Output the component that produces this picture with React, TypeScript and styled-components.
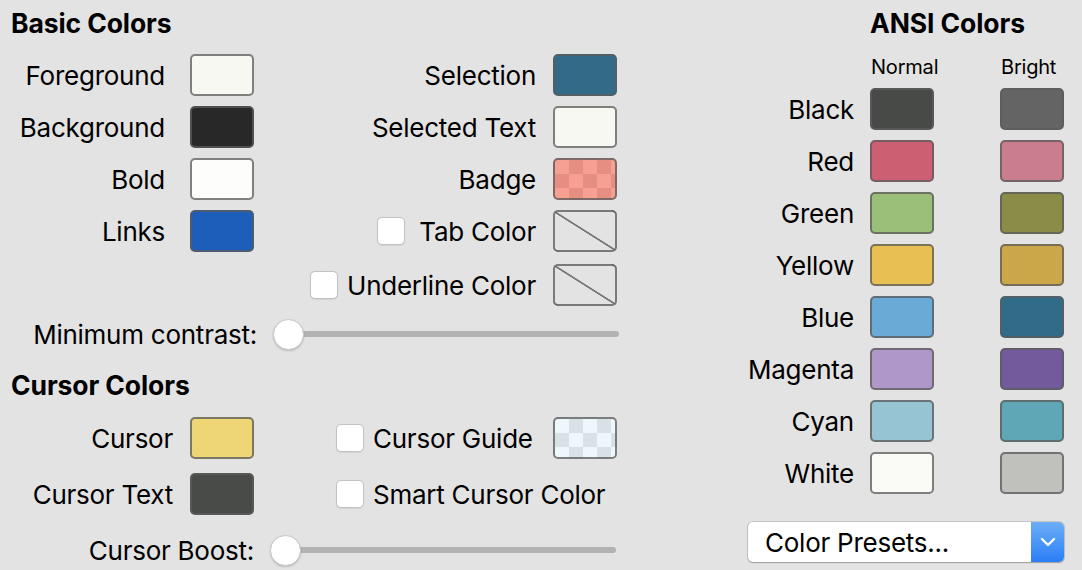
import React from 'react';
import styled, { createGlobalStyle } from 'styled-components';

const GlobalStyle = createGlobalStyle`
  html, body { margin: 0; padding: 0; background: #e3e3e3; }
  body { font-family: Inter, "Noto Sans", "Liberation Sans", sans-serif; color: #000; }
  * { box-sizing: border-box; }
`;

const Page = styled.div`
  width: 1082px;
  height: 570px;
  display: flex;
  overflow: hidden;
  background: #e3e3e3;
`;

const LeftPanel = styled.div`
  width: 640px;
  padding: 8px 0 0 11px;
  display: flex;
  flex-direction: column;
`;

const RightPanel = styled.div`
  flex: 1;
  padding: 8px 18px 0 0;
  display: flex;
  flex-direction: column;
`;

const Heading = styled.h2<{ $mt?: number }>`
  margin: ${p => p.$mt ?? 0}px 0 0 0;
  font-size: 26.5px;
  font-weight: 700;
  line-height: 30px;
  letter-spacing: -0.1px;
  white-space: nowrap;
`;

const Label = styled.span`
  font-size: 26px;
  line-height: 30px;
  padding-top: 2px;
  white-space: nowrap;
  letter-spacing: -0.25px;
`;

const Swatch = styled.div<{ $bg: string }>`
  width: 64px;
  height: 42px;
  flex: none;
  border: 2px solid rgba(92, 92, 92, 0.78);
  border-radius: 5px;
  background: ${p => p.$bg};
`;

const checker = (a: string, b: string) =>
  `repeating-conic-gradient(${a} 0 25%, ${b} 0 50%) 0 0 / 28px 28px`;
const none =
  'linear-gradient(to top right, transparent calc(50% - 1.2px), #7a7a7a calc(50% - 0.6px), #7a7a7a calc(50% + 0.6px), transparent calc(50% + 1.2px))';

const Checkbox = styled.span`
  width: 28px;
  height: 28px;
  flex: none;
  background: #fff;
  border: 1px solid #c2c2c2;
  border-radius: 5px;
  box-shadow: 0 0.5px 1px rgba(0, 0, 0, 0.08);
`;

const Grid = styled.div<{ $mt: number }>`
  display: flex;
  margin-top: ${p => p.$mt}px;
`;

const Column = styled.div<{ $width: number; $gap: number; $pl?: number }>`
  width: ${p => p.$width}px;
  padding-left: ${p => p.$pl ?? 0}px;
  display: flex;
  flex-direction: column;
  gap: ${p => p.$gap}px;
`;

const ColorRow = styled.div<{ $gap: number; $mt?: number; $start?: boolean }>`
  display: flex;
  align-items: center;
  justify-content: ${p => (p.$start ? 'flex-start' : 'flex-end')};
  height: 42px;
  gap: ${p => p.$gap}px;
  margin-top: ${p => p.$mt ?? 0}px;
`;

const CheckLabel = styled.label<{ $gap: number }>`
  display: flex;
  align-items: center;
  gap: ${p => p.$gap}px;
`;

const PushRight = styled.div`
  margin-left: auto;
`;

const SliderRow = styled.div<{ $width: number; $mt: number }>`
  width: ${p => p.$width}px;
  margin-top: ${p => p.$mt}px;
  height: 32px;
  display: flex;
  align-items: center;
  justify-content: flex-end;
  gap: 16px;
`;

const Slider = styled.div`
  position: relative;
  width: 346px;
  height: 32px;
  display: flex;
  align-items: center;
`;

const Track = styled.div`
  flex: 1;
  margin-left: 14px;
  height: 6px;
  border-radius: 3px;
  background: #b2b2b2;
`;

const Knob = styled.div`
  position: absolute;
  left: 0;
  top: 50%;
  width: 31px;
  height: 31px;
  margin-top: -15.5px;
  border-radius: 50%;
  background: #fff;
  border: 1px solid #c8c8c8;
  box-shadow: 0 1px 2px rgba(0, 0, 0, 0.18);
`;

const AnsiRow = styled.div<{ $mt?: number; $h?: number }>`
  display: flex;
  align-items: center;
  height: ${p => p.$h ?? 42}px;
  margin-top: ${p => p.$mt ?? 0}px;
`;

const AnsiLabel = styled(Label)`
  flex: 1;
  text-align: right;
  margin-right: 16px;
`;

const ColumnsBlock = styled.div`
  width: 194px;
  flex: none;
  display: flex;
  align-items: center;
`;

const ColHeader = styled.span`
  width: 64px;
  flex: none;
  padding-left: 1px;
  font-size: 20px;
  line-height: 24px;
  letter-spacing: -0.2px;
  white-space: nowrap;
`;

const HeaderSpacer = styled.div`
  flex: 1;
  margin-right: 16px;
`;

const BrightGap = styled.div`
  width: 66px;
  flex: none;
`;

const Popup = styled.div`
  margin: 28px 0 0 auto;
  width: 316px;
  height: 40px;
  display: flex;
  align-items: stretch;
  background: #fff;
  border-radius: 5px;
  box-shadow: 0 0 0 1px rgba(0, 0, 0, 0.12), 0 1px 1.5px rgba(0, 0, 0, 0.22);
  overflow: hidden;
`;

const PopupText = styled.span`
  flex: 1;
  padding: 1px 0 0 17px;
  font-size: 26px;
  line-height: 39px;
  letter-spacing: -0.25px;
  white-space: nowrap;
`;

const PopupButton = styled.div`
  width: 33px;
  display: flex;
  align-items: center;
  justify-content: center;
  background: linear-gradient(#6caef7, #2a7ef6);
`;

const ansi: [string, string, string][] = [
  ['Black', '#474a46', '#646464'],
  ['Red', '#cc5f72', '#c97d8d'],
  ['Green', '#9bbe79', '#8a8c48'],
  ['Yellow', '#e8bf53', '#cca74a'],
  ['Blue', '#6aaad7', '#306b89'],
  ['Magenta', '#b097c9', '#735a9c'],
  ['Cyan', '#96c4d2', '#5fa7b7'],
  ['White', '#fafaf7', '#c0c1bd'],
];

export default function App() {
  return (
    <>
      <GlobalStyle />
      <Page>
        <LeftPanel>
          <Heading>Basic Colors</Heading>
          <Grid $mt={16}>
            <Column $width={243} $gap={10}>
              <ColorRow $gap={25}>
                <Label>Foreground</Label>
                <Swatch $bg="#f8f8f2" />
              </ColorRow>
              <ColorRow $gap={25}>
                <Label>Background</Label>
                <Swatch $bg="#282828" />
              </ColorRow>
              <ColorRow $gap={25}>
                <Label>Bold</Label>
                <Swatch $bg="#fdfdfb" />
              </ColorRow>
              <ColorRow $gap={25}>
                <Label>Links</Label>
                <Swatch $bg="#1d5eba" />
              </ColorRow>
            </Column>
            <Column $width={363} $gap={10}>
              <ColorRow $gap={17}>
                <Label>Selection</Label>
                <Swatch $bg="#336a87" />
              </ColorRow>
              <ColorRow $gap={17}>
                <Label>Selected Text</Label>
                <Swatch $bg="#f8f8f2" />
              </ColorRow>
              <ColorRow $gap={17}>
                <Label>Badge</Label>
                <Swatch $bg={checker('#e68e82', '#f6a092')} />
              </ColorRow>
              <ColorRow $gap={17}>
                <CheckLabel $gap={14}>
                  <Checkbox />
                  <Label>Tab Color</Label>
                </CheckLabel>
                <Swatch $bg={none} />
              </ColorRow>
              <ColorRow $gap={17} $mt={2}>
                <CheckLabel $gap={9}>
                  <Checkbox />
                  <Label>Underline Color</Label>
                </CheckLabel>
                <Swatch $bg={none} />
              </ColorRow>
            </Column>
          </Grid>
          <SliderRow $width={608} $mt={12}>
            <Label>Minimum contrast:</Label>
            <Slider>
              <Track />
              <Knob />
            </Slider>
          </SliderRow>

          <Heading $mt={20}>Cursor Colors</Heading>
          <Grid $mt={17}>
            <Column $width={243} $gap={14}>
              <ColorRow $gap={17}>
                <Label>Cursor</Label>
                <Swatch $bg="#eed576" />
              </ColorRow>
              <ColorRow $gap={17}>
                <Label>Cursor Text</Label>
                <Swatch $bg="#484b47" />
              </ColorRow>
            </Column>
            <Column $width={363} $gap={14} $pl={82}>
              <ColorRow $gap={9} $start>
                <CheckLabel $gap={9}>
                  <Checkbox />
                  <Label>Cursor Guide</Label>
                </CheckLabel>
                <PushRight>
                  <Swatch $bg={checker('#d7e1e6', '#eef8fc')} />
                </PushRight>
              </ColorRow>
              <ColorRow $gap={9} $start>
                <CheckLabel $gap={9}>
                  <Checkbox />
                  <Label>Smart Cursor Color</Label>
                </CheckLabel>
              </ColorRow>
            </Column>
          </Grid>
          <SliderRow $width={605} $mt={19}>
            <Label>Cursor Boost:</Label>
            <Slider>
              <Track />
              <Knob />
            </Slider>
          </SliderRow>
        </LeftPanel>

        <RightPanel>
          <AnsiRow $h={30}>
            <HeaderSpacer />
            <ColumnsBlock>
              <Heading>ANSI Colors</Heading>
            </ColumnsBlock>
          </AnsiRow>
          <AnsiRow $h={24} $mt={17}>
            <HeaderSpacer />
            <ColumnsBlock>
              <ColHeader>Normal</ColHeader>
              <BrightGap />
              <ColHeader>Bright</ColHeader>
            </ColumnsBlock>
          </AnsiRow>
          {ansi.map(([name, normal, bright], i) => (
            <AnsiRow key={name} $mt={i === 0 ? 9 : 10}>
              <AnsiLabel>{name}</AnsiLabel>
              <ColumnsBlock>
                <Swatch $bg={normal} />
                <BrightGap />
                <Swatch $bg={bright} />
              </ColumnsBlock>
            </AnsiRow>
          ))}
          <Popup>
            <PopupText>Color Presets...</PopupText>
            <PopupButton>
              <svg width="16" height="10" viewBox="0 0 16 10">
                <path d="M2 2 L8 8 L14 2" fill="none" stroke="#fff" strokeWidth="2.4" strokeLinecap="round" strokeLinejoin="round" />
              </svg>
            </PopupButton>
          </Popup>
        </RightPanel>
      </Page>
    </>
  );
}
